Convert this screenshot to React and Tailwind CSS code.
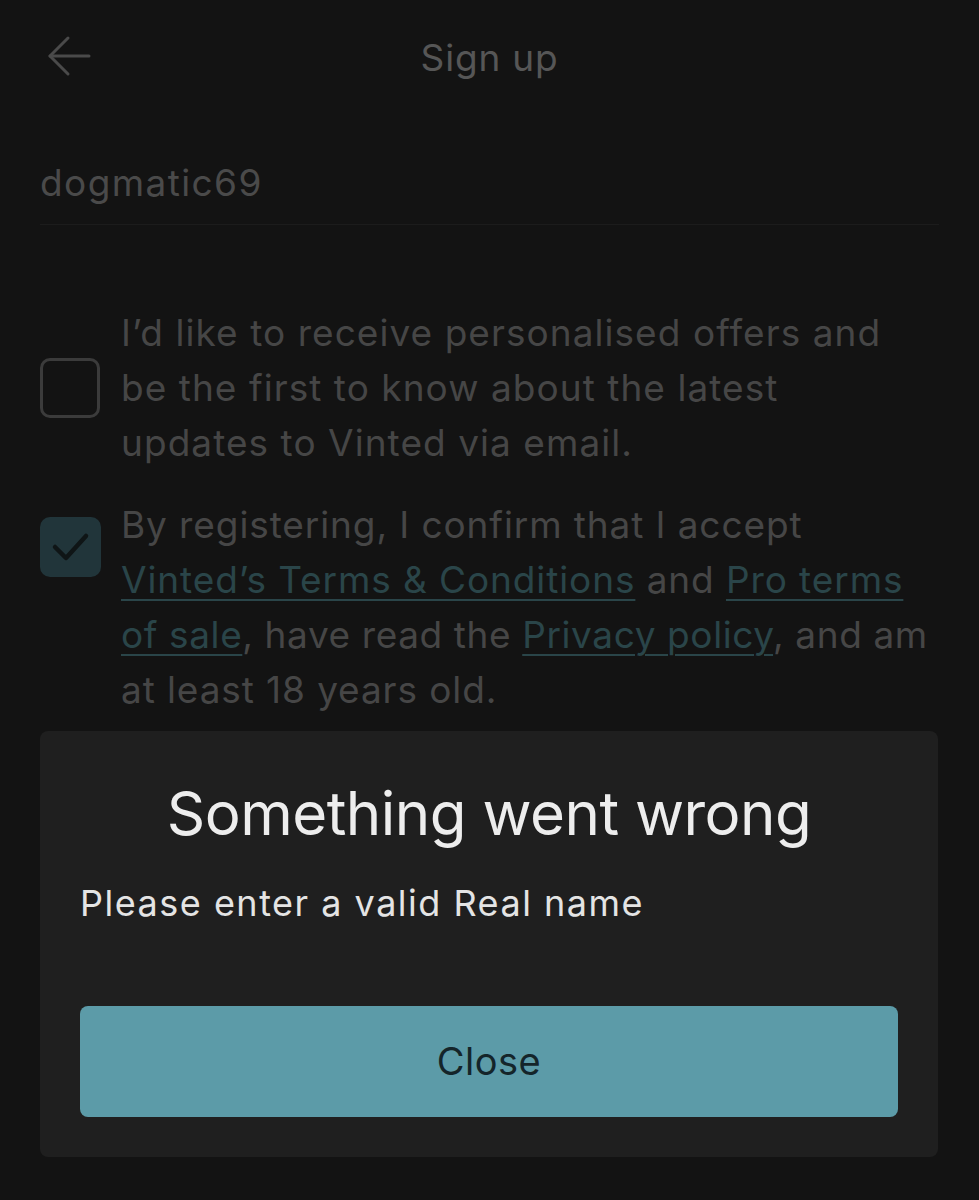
export default function App() {
  const font = { fontFamily: 'Inter, Roboto, "Liberation Sans", sans-serif' };
  const link = "text-[#2a4549] underline underline-offset-[6px] decoration-2";
  return (
    <div className="relative w-[979px] h-[1200px] overflow-hidden bg-[#131313]" style={font}>
      <div className="relative h-[114px] flex items-center justify-center">
        <svg className="absolute left-[46px] top-[35px]" width="46" height="44" viewBox="0 0 46 44" fill="none" stroke="#4a4a4a" strokeWidth="3" strokeLinecap="round" strokeLinejoin="round">
          <path d="M43 21H4" />
          <path d="M22 3L4 21l18 18" />
        </svg>
        <span className="text-[37px] text-[#565656] leading-none tracking-[0.8px]">Sign up</span>
      </div>
      <div className="mx-[40px] pt-[44px] pb-[16px] border-b border-[#1c1c1c]">
        <div className="text-[37px] text-[#4a4a4a] leading-[50px] tracking-[1.4px]">dogmatic69</div>
      </div>
      <div className="px-[40px] pt-[80px] flex flex-col gap-[27px]">
        <div className="flex items-center gap-[21px]">
          <div className="w-[60px] h-[60px] shrink-0 rounded-[10px] border-[3.5px] border-[#3b3b3b]" />
          <p className="text-[37px] leading-[55px] text-[#464646] tracking-[1.05px] whitespace-nowrap">
            <span className="block">I’d like to receive personalised offers and</span>
            <span className="block">be the first to know about the latest</span>
            <span className="block">updates to Vinted via email.</span>
          </p>
        </div>
        <div className="flex items-start gap-[20px]">
          <div className="mt-[20px] w-[61px] h-[60px] shrink-0 rounded-[10px] bg-[#21353a]">
            <svg width="61" height="60" viewBox="0 0 61 60" fill="none" stroke="#0f1516" strokeWidth="4.5" strokeLinecap="round" strokeLinejoin="round">
              <path d="M15 30l11 11 20-22" />
            </svg>
          </div>
          <p className="text-[37px] leading-[55px] text-[#464646] tracking-[0.9px] whitespace-nowrap">
            <span className="block">By registering, I confirm that I accept</span>
            <span className="block">
              <span className={link}>Vinted’s Terms &amp; Conditions</span> and <span className={link}>Pro terms</span>
            </span>
            <span className="block tracking-[0.6px]">
              <span className={link}>of sale</span>, have read the <span className={link}>Privacy policy</span>, and am
            </span>
            <span className="block">at least 18 years old.</span>
          </p>
        </div>
      </div>

      <div className="absolute left-[40px] top-[731px] w-[898px] h-[426px] rounded-[8px] bg-[#1f1f1f] flex flex-col px-[40px]">
        <h2 className="mt-[46px] text-center text-[60px] leading-[72px] text-[#ededed] tracking-[-0.5px]">Something went wrong</h2>
        <p className="mt-[30px] text-[36px] leading-[48px] text-[#e4e4e4] tracking-[1.5px]">Please enter a valid Real name</p>
        <button className="mt-[79px] h-[111px] w-full rounded-[8px] bg-[#5c9ba8] text-[38px] text-[#14252a] tracking-[0.5px]">Close</button>
      </div>
    </div>
  );
}
